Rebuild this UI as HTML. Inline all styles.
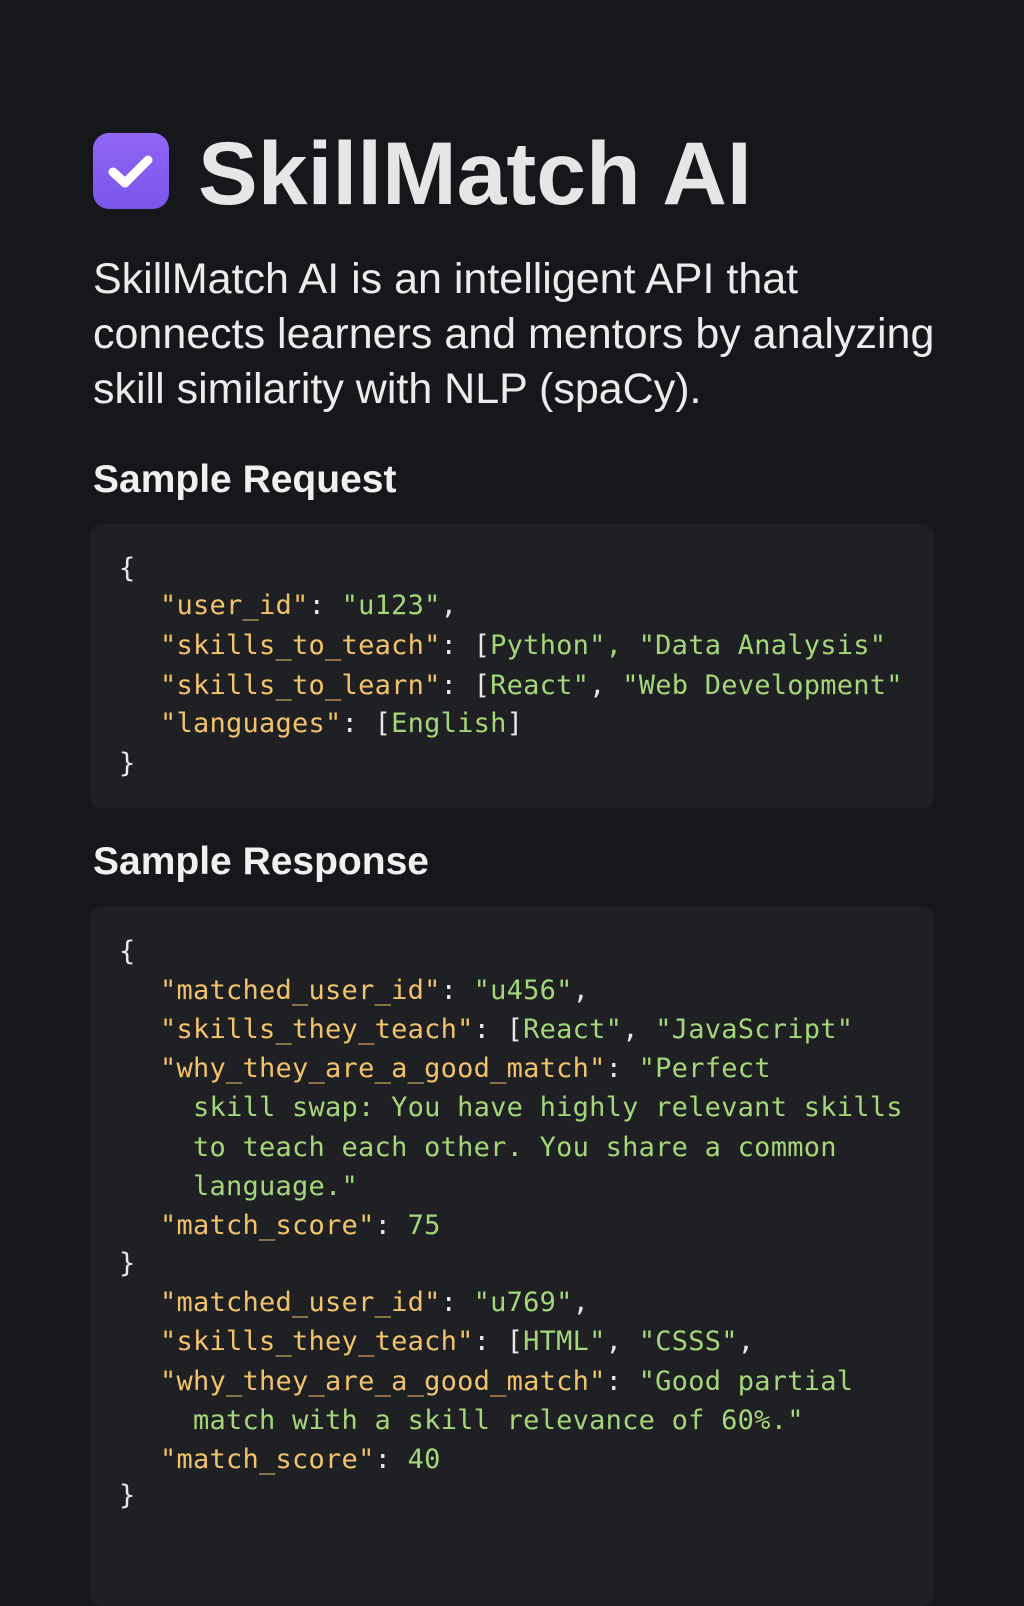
<!DOCTYPE html>
<html><head><meta charset="utf-8"><style>
html,body{margin:0;padding:0;}
body{width:1024px;height:1536px;background:#16171a;position:relative;overflow:hidden;font-family:"Liberation Sans",sans-serif;color:#ececec;}
.icon{position:absolute;left:93px;top:133px;width:76px;height:76px;border-radius:16px;background:linear-gradient(180deg,#9066f5,#7a55ea);}
h1{position:absolute;left:198px;top:118px;margin:0;font-size:89.5px;font-weight:bold;color:#e6e6e6;line-height:110px;}
p{position:absolute;left:93px;top:252px;margin:0;font-size:43px;line-height:55px;color:#ececec;white-space:nowrap;}
h2{position:absolute;left:93px;margin:0;font-size:39px;font-weight:bold;color:#f0f0f0;line-height:44px;}
.box{position:absolute;left:90px;width:844px;background:#1f2023;border-radius:12px;}
.l{position:absolute;font-family:"DejaVu Sans Mono","Liberation Mono",monospace;font-size:27px;letter-spacing:0.25px;line-height:39px;white-space:pre;color:#e8e8e8;}
.k{color:#f2c36b}.s{color:#a6d67a}.p{color:#e0e0e0}
</style></head><body>
<div class="icon"><svg width="76" height="76" viewBox="0 0 76 76"><path d="M20 39 L32 50 L55 27" fill="none" stroke="#fff" stroke-width="9" stroke-linecap="round" stroke-linejoin="round"/></svg></div>
<h1>SkillMatch AI</h1>
<p>SkillMatch AI is an intelligent API that<br>connects learners and mentors by analyzing<br>skill similarity with NLP (spaCy).</p>
<h2 style="top:458px">Sample Request</h2>
<div class="box" style="top:524px;height:284px"></div>
<div class="l" style="left:119px;top:549px">{</div>
<div class="l" style="left:160px;top:586px"><span class="k">"user_id"</span>: <span class="s">"u123"</span>,</div>
<div class="l" style="left:160px;top:626px"><span class="k">"skills_to_teach"</span>: [<span class="s">Python", "Data Analysis"</span></div>
<div class="l" style="left:160px;top:666px"><span class="k">"skills_to_learn"</span>: [<span class="s">React"</span>, <span class="s">"Web Development"</span></div>
<div class="l" style="left:160px;top:704px"><span class="k">"languages"</span>: [<span class="s">English</span>]</div>
<div class="l" style="left:119px;top:744px">}</div>
<h2 style="top:840px">Sample Response</h2>
<div class="box" style="top:906px;height:700px"></div>
<div class="l" style="left:119px;top:932px">{</div>
<div class="l" style="left:160px;top:971px"><span class="k">"matched_user_id"</span>: <span class="s">"u456"</span>,</div>
<div class="l" style="left:160px;top:1010px"><span class="k">"skills_they_teach"</span>: [<span class="s">React"</span>, <span class="s">"JavaScript"</span></div>
<div class="l" style="left:160px;top:1049px"><span class="k">"why_they_are_a_good_match"</span>: <span class="s">"Perfect</span></div>
<div class="l s" style="left:193px;top:1088px">skill swap: You have highly relevant skills</div>
<div class="l s" style="left:193px;top:1128px">to teach each other. You share a common</div>
<div class="l s" style="left:193px;top:1167px">language."</div>
<div class="l" style="left:160px;top:1206px"><span class="k">"match_score"</span>: <span class="s">75</span></div>
<div class="l" style="left:119px;top:1244px">}</div>
<div class="l" style="left:160px;top:1283px"><span class="k">"matched_user_id"</span>: <span class="s">"u769"</span>,</div>
<div class="l" style="left:160px;top:1322px"><span class="k">"skills_they_teach"</span>: [<span class="s">HTML"</span>, <span class="s">"CSSS"</span>,</div>
<div class="l" style="left:160px;top:1362px"><span class="k">"why_they_are_a_good_match"</span>: <span class="s">"Good partial</span></div>
<div class="l s" style="left:193px;top:1401px">match with a skill relevance of 60%."</div>
<div class="l" style="left:160px;top:1440px"><span class="k">"match_score"</span>: <span class="s">40</span></div>
<div class="l" style="left:119px;top:1476px">}</div>
</body></html>
